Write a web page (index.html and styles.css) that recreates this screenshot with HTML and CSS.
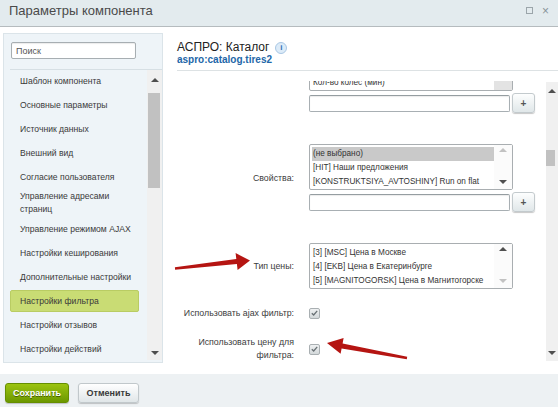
FILE: index.html
```html
<!DOCTYPE html>
<html>
<head>
    <meta charset="utf-8">
    <title>Параметры компонента</title>
    <link rel="stylesheet" href="styles.css">
</head>

<body>
<div class="dialog">
    <div class="titlebar">
        <span class="title">Параметры компонента</span>
        <span class="tb-icons">
            <span class="tb-max"></span>
            <span class="tb-close">&#215;</span>
        </span>
    </div>

    <div class="dialog-body">
        <div class="sidebar">
            <div class="search">
                <input type="text" class="search-input" placeholder="Поиск">
            </div>
            <div class="nav">
                <ul class="nav-list">
                    <li class="nav-item">Шаблон компонента</li>
                    <li class="nav-item">Основные параметры</li>
                    <li class="nav-item">Источник данных</li>
                    <li class="nav-item">Внешний вид</li>
                    <li class="nav-item">Согласие пользователя</li>
                    <li class="nav-item">Управление адресами страниц</li>
                    <li class="nav-item">Управление режимом AJAX</li>
                    <li class="nav-item">Настройки кеширования</li>
                    <li class="nav-item">Дополнительные настройки</li>
                    <li class="nav-item active">Настройки фильтра</li>
                    <li class="nav-item">Настройки отзывов</li>
                    <li class="nav-item">Настройки действий</li>
                </ul>
                <div class="scrollbar nav-scroll">
                    <span class="sb-btn sb-up"></span>
                    <span class="sb-track"><span class="sb-thumb"></span></span>
                    <span class="sb-btn sb-down"></span>
                </div>
            </div>
        </div>

        <div class="main">
            <div class="main-head">
                <div class="comp-title">АСПРО: Каталог <span class="info">i</span></div>
                <div class="comp-code">aspro:catalog.tires2</div>
            </div>

            <div class="form-wrap">
                <div class="form-view">
                    <div class="form">
                        <div class="row row-list">
                            <div class="row-label"></div>
                            <div class="row-ctrl">
                                <div class="listbox">
                                    <div class="listbox-opts">
                                        <div class="opt">Ширина (мин)</div>
                                        <div class="opt">Высота (мин)</div>
                                        <div class="opt">Кол-во колёс (мин)</div>
                                    </div>
                                    <div class="listbox-sb grey">
                                        <span class="lb-thumb"></span>
                                    </div>
                                </div>
                                <div class="add-line">
                                    <input type="text" class="field">
                                    <button class="btn-add">+</button>
                                </div>
                            </div>
                        </div>

                        <div class="row row-list">
                            <div class="row-label">Свойства:</div>
                            <div class="row-ctrl">
                                <div class="listbox">
                                    <div class="listbox-opts">
                                        <div class="opt opt-sel">(не выбрано)</div>
                                        <div class="opt">[HIT] Наши предложения</div>
                                        <div class="opt">[KONSTRUKTSIYA_AVTOSHINY] Run on flat</div>
                                    </div>
                                    <div class="listbox-sb">
                                        <span class="arr-up off"></span>
                                        <span class="arr-down"></span>
                                    </div>
                                </div>
                                <div class="add-line">
                                    <input type="text" class="field">
                                    <button class="btn-add">+</button>
                                </div>
                            </div>
                        </div>

                        <div class="row row-list">
                            <div class="row-label">Тип цены:</div>
                            <div class="row-ctrl">
                                <div class="listbox">
                                    <div class="listbox-opts">
                                        <div class="opt">[3] [MSC] Цена в Москве</div>
                                        <div class="opt">[4] [EKB] Цена в Екатеринбурге</div>
                                        <div class="opt">[5] [MAGNITOGORSK] Цена в Магнитогорске</div>
                                    </div>
                                    <div class="listbox-sb">
                                        <span class="arr-up"></span>
                                        <span class="arr-down off"></span>
                                    </div>
                                </div>
                            </div>
                        </div>

                        <div class="row row-check">
                            <div class="row-label">Использовать ajax фильтр:</div>
                            <div class="row-ctrl">
                                <span class="check">
                                    <svg width="7" height="6" viewBox="0 0 7 6"><path d="M0.8 3.2 L2.7 5 L6.2 0.9" fill="none" stroke="#687074" stroke-width="1.3"/></svg>
                                </span>
                            </div>
                        </div>

                        <div class="row row-check row-last">
                            <div class="row-label">Использовать цену для фильтра:</div>
                            <div class="row-ctrl">
                                <span class="check">
                                    <svg width="7" height="6" viewBox="0 0 7 6"><path d="M0.8 3.2 L2.7 5 L6.2 0.9" fill="none" stroke="#687074" stroke-width="1.3"/></svg>
                                </span>
                            </div>
                        </div>
                    </div>
                </div>
                <div class="scrollbar form-scroll">
                    <span class="sb-btn sb-up"></span>
                    <span class="sb-track"><span class="sb-thumb"></span></span>
                    <span class="sb-btn sb-down"></span>
                </div>
            </div>
        </div>
    </div>

    <div class="footer">
        <button class="btn btn-save">Сохранить</button>
        <button class="btn btn-cancel">Отменить</button>
    </div>

    <!-- red pointers over the form -->
    <svg class="pointers" width="558" height="407" viewBox="0 0 558 407">
        <polygon fill="#b51512" points="174.9,267.3 236.3,259 235.6,253.1 250,260.5 237.6,269.9 236.9,264 175.1,269.7"/>
        <polygon fill="#b51512" points="407.2,356.8 342.6,343.4 343.6,338 327,343 340.6,353.8 341.6,348.4 406.8,359.2"/>
    </svg>
</div>
</body>

</html>
```

FILE: styles.css
```css
* {
    box-sizing: border-box;
    margin: 0;
    padding: 0;
}

body {
    font-family: "Liberation Sans", Arial, sans-serif;
    color: #333;
    background: #fff;
}

.dialog {
    position: relative;
    width: 558px;
    height: 407px;
    display: flex;
    flex-direction: column;
    overflow: hidden;
}

/* title bar */
.titlebar {
    height: 27px;
    flex: none;
    display: flex;
    justify-content: space-between;
    align-items: flex-start;
    padding: 3px 9px 0;
    background: #e3ebee;
    border-bottom: 1px solid #b5bbbe;
}

.title {
    font-size: 13px;
    line-height: 15px;
    color: #4a4a4a;
}

.tb-icons {
    display: flex;
    align-items: center;
    gap: 9px;
    height: 15px;
}

.tb-max {
    width: 7px;
    height: 7px;
    border: 1px solid #9ba5aa;
}

.tb-close {
    font-size: 12px;
    line-height: 1;
    color: #8a949a;
}

.dialog-body {
    flex: 1;
    display: flex;
    min-height: 0;
}

/* left navigation */
.sidebar {
    width: 160px;
    flex: none;
    margin: 6px 2px 11px 3px;
    display: flex;
    flex-direction: column;
    background: #eef4f8;
    border: 1px solid #dbe4e9;
}

.search {
    padding: 8px 25px 10px 7px;
}

.search-input {
    display: block;
    width: 125px;
    height: 17px;
    padding: 0 4px;
    font-family: "Liberation Sans", Arial, sans-serif;
    font-size: 9px;
    border: 1px solid #a7aeb2;
    border-radius: 2px;
    box-shadow: inset 0 1px 1px rgba(0, 0, 0, 0.08);
    background: #fff;
}

.search-input::placeholder {
    color: #555;
}

.nav {
    flex: 1;
    display: flex;
    min-height: 0;
    margin-left: 6px;
    border-top: 1px solid #d6dfe4;
}

.nav-list {
    flex: 1;
    list-style: none;
    margin-top: -1px;
    overflow: hidden;
}

.nav-item {
    min-height: 24px;
    display: flex;
    align-items: center;
    padding: 1px 10px 1px 10px;
    font-size: 8.6px;
    line-height: 13px;
    color: #3a3a3a;
}

.nav-item.active {
    min-height: 22px;
    margin: 1px 8px 1px 0;
    padding-left: 9px;
    background: #c9dc74;
    border: 1px solid #b9cc63;
    border-radius: 2px;
}

/* scrollbars */
.scrollbar {
    display: flex;
    flex-direction: column;
    flex: none;
    background: #f0f0f0;
}

.sb-btn {
    display: flex;
    align-items: center;
    justify-content: center;
    flex: none;
}

.sb-up::before {
    content: "";
    border-left: 4px solid transparent;
    border-right: 4px solid transparent;
    border-bottom: 4px solid #4f4f4f;
}

.sb-down::before {
    content: "";
    border-left: 4px solid transparent;
    border-right: 4px solid transparent;
    border-top: 4px solid #4f4f4f;
}

.sb-track {
    flex: 1;
}

.sb-thumb {
    display: block;
    background: #c1c1c1;
}

.nav-scroll {
    width: 15px;
    margin-bottom: 2px;
}

.nav-scroll .sb-up { height: 20px; }
.nav-scroll .sb-down { height: 14px; }
.nav-scroll .sb-thumb {
    margin: 3px 2px 0 1px;
    height: 95px;
}

.form-scroll {
    width: 12px;
    margin: 1px 0 1px;
}

.form-scroll .sb-up { height: 18px; }
.form-scroll .sb-down { height: 16px; }
.form-scroll .sb-thumb {
    margin: 50px 3px 0 0;
    height: 16px;
}

/* right part */
.main {
    flex: 1;
    display: flex;
    flex-direction: column;
    min-width: 0;
}

.main-head {
    margin-left: 12px;
    padding: 13px 0 5px;
    border-bottom: 1px solid #dde2e4;
}

.comp-title {
    display: flex;
    align-items: center;
    font-size: 12px;
    line-height: 15px;
    color: #222;
}

.info {
    display: inline-flex;
    align-items: center;
    justify-content: center;
    width: 12px;
    height: 12px;
    margin-left: 6px;
    border-radius: 50%;
    border: 1px solid #a9c7e4;
    background: #dcebf8;
    color: #2f6fb5;
    font-size: 8px;
    font-weight: bold;
}

.comp-code {
    font-size: 10px;
    line-height: 10px;
    font-weight: bold;
    color: #2266a8;
}

.form-wrap {
    flex: 1;
    display: flex;
    min-height: 0;
    margin: 10px 0 12px;
}

.form-view {
    flex: 1;
    overflow: hidden;
}

.form {
    margin-top: -51px;
    padding-left: 12px;
}

.row {
    display: flex;
    align-items: center;
}

.row-list {
    padding: 15px 0 16px;
}

.row-check {
    height: 16px;
}

.row-last {
    height: 26px;
    margin-top: 15px;
}

.row-label {
    width: 117px;
    flex: none;
    margin-right: 15px;
    text-align: right;
    font-size: 8.8px;
    line-height: 13px;
    color: #3c3c3c;
}

/* list selects */
.listbox {
    width: 204px;
    height: 46px;
    display: flex;
    background: #fff;
    border: 1px solid #a9aeb1;
    border-radius: 2px;
}

.listbox-opts {
    flex: 1;
    min-width: 0;
    padding: 2px 0 2px 2px;
    overflow: hidden;
}

.opt {
    height: 14px;
    line-height: 14px;
    padding-left: 1px;
    font-size: 8.2px;
    white-space: nowrap;
    color: #333;
}

.opt-sel {
    background: #c9c9c9;
}

.listbox-sb {
    width: 18px;
    flex: none;
    display: flex;
    flex-direction: column;
    justify-content: space-between;
    align-items: center;
    padding: 3px 0 5px;
    background: #fbfbfb;
}

.listbox-sb.grey {
    justify-content: flex-end;
    padding: 0;
    background: #f0f0f0;
}

.lb-thumb {
    width: 100%;
    height: 14px;
    background: #e3e3e3;
}

.arr-up,
.arr-down {
    display: block;
    border-left: 4px solid transparent;
    border-right: 4px solid transparent;
}

.arr-up { border-bottom: 4px solid #4f4f4f; }
.arr-down { border-top: 4px solid #4f4f4f; }
.arr-up.off { border-bottom-color: #c2c2c2; }
.arr-down.off { border-top-color: #c2c2c2; }

.add-line {
    display: flex;
    align-items: center;
    margin-top: 2px;
}

.field {
    width: 201px;
    height: 17px;
    border: 1px solid #a8afb3;
    border-top-color: #959da1;
    border-radius: 2px;
    box-shadow: inset 0 1px 1px rgba(0, 0, 0, 0.08);
    background: #fff;
}

.btn-add {
    width: 23px;
    height: 20px;
    margin-left: 2px;
    border: 1px solid #c3cacd;
    border-radius: 3px;
    background: linear-gradient(#fdfefe, #e0e7e9);
    box-shadow: 0 1px 1px rgba(0, 0, 0, 0.22);
    font-family: "Liberation Sans", Arial, sans-serif;
    font-size: 10px;
    font-weight: bold;
    color: #555;
}

.check {
    display: flex;
    align-items: center;
    justify-content: center;
    width: 11px;
    height: 11px;
    border: 1px solid #a9afb2;
    border-radius: 2px;
    background: linear-gradient(#eff1f2, #d3d8da);
}

/* footer */
.footer {
    height: 33px;
    flex: none;
    display: flex;
    align-items: flex-start;
    gap: 9px;
    padding: 9px 5px 0;
    background: #edf1f3;
}

.btn {
    height: 20px;
    border: 1px solid #c1c8cb;
    border-radius: 3px;
    background: linear-gradient(#ffffff, #e0e6e8);
    box-shadow: 0 1px 1px rgba(0, 0, 0, 0.2);
    font-family: "Liberation Sans", Arial, sans-serif;
    font-size: 9px;
    font-weight: bold;
    color: #3a3a3a;
}

.btn-save {
    width: 64px;
    background: linear-gradient(#9cc40f, #6c9800);
    border-color: #668f00;
    color: #fff;
    text-shadow: 0 1px 0 rgba(0, 0, 0, 0.45);
}

.btn-cancel {
    width: 61px;
}

.pointers {
    position: absolute;
    left: 0;
    top: 0;
    pointer-events: none;
}
```
